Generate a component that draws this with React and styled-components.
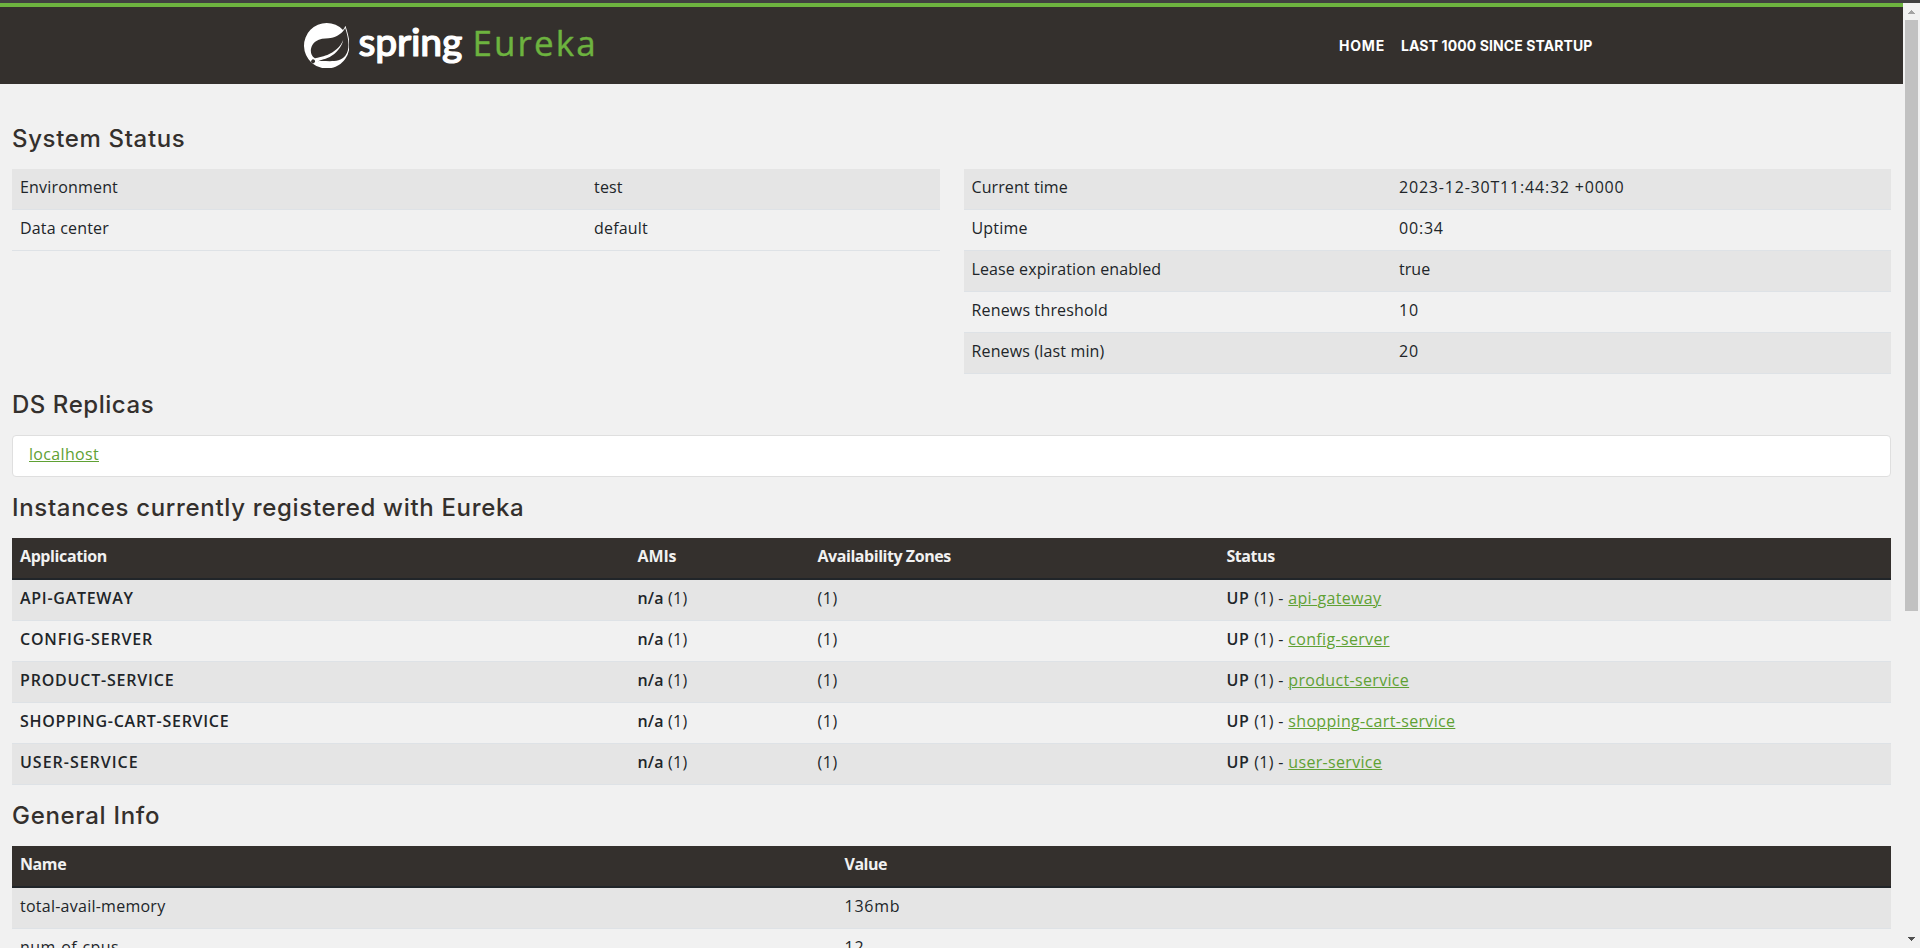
import React from 'react';
import styled, { createGlobalStyle } from 'styled-components';
import { SiSpring } from 'react-icons/si';

const GlobalStyle = createGlobalStyle`
  * { box-sizing: border-box; }
  html, body { margin: 0; height: 948px; overflow: hidden; }
  body {
    background: #f1f1f1;
    color: #212529;
    font: 400 16px/24px "Open Sans", "Noto Sans", sans-serif;
  }
`;

const Screen = styled.div`
  display: flex;
  flex-direction: column;
  height: 948px;
  overflow: hidden;
`;
const WindowEdge = styled.div`
  flex: none;
  height: 3px;
  background: #404040;
`;
const Viewport = styled.div`
  flex: 1;
  min-height: 0;
  display: flex;
`;
const Page = styled.main`
  flex: 1;
  min-width: 0;
  overflow: hidden;
`;

/* Header */
const Header = styled.header`
  height: 81px;
  border-top: 4px solid #6db33f;
  background: #34302d;
`;
const HeaderInner = styled.div`
  width: 1320px;
  height: 77px;
  margin: 0 auto;
  padding: 0 19px 0 12px;
  display: flex;
  justify-content: space-between;
  align-items: center;
`;
const Brand = styled.div`
  display: flex;
  align-items: center;
  height: 77px;
`;
const Mark = styled(SiSpring)`
  width: 45.5px;
  height: 45.5px;
  color: #fff;
`;
const Wordmark = styled.svg`
  display: block;
  width: 250px;
  height: 77px;
`;
const Nav = styled.nav`
  display: flex;
  gap: 16px;
`;
const NavLink = styled.a`
  color: #fff;
  font: 700 14px/20px Inter, "Open Sans", sans-serif;
  letter-spacing: ${(p) => p.$ls || 0}px;
`;

/* Content */
const Content = styled.div`
  padding: 24px 12px 0;
`;
const Heading = styled.h1`
  height: 61px;
  margin: 0;
  padding-top: 16px;
  color: #34302d;
  font: 500 24px/29px Inter, "Open Sans", sans-serif;
  letter-spacing: ${(p) => p.$ls || 0}px;
`;
const Columns = styled.div`
  display: grid;
  grid-template-columns: 1fr 1fr;
  gap: 24px;
  align-items: start;
`;
const Table = styled.div`
  display: grid;
  grid-template-columns: ${(p) => p.$cols};
`;
const Row = styled.div`
  display: grid;
  grid-template-columns: subgrid;
  grid-column: 1 / -1;
  height: 41px;
  border-bottom: 1px solid #dee2e6;
  background: ${(p) => (p.$odd ? '#e5e5e5' : 'transparent')};
`;
const HeadRow = styled(Row)`
  height: 42px;
  border-bottom: 2px solid #212529;
  background: #34302d;
  color: #f1f1f1;
  font-weight: 700;
`;
const Cell = styled.div`
  padding: 6px 8px 0;
  white-space: pre;
  letter-spacing: ${(p) => (p.$ls === undefined ? 0.18 : p.$ls)}px;
`;
const Strong = styled.b`
  font-weight: 600;
  letter-spacing: ${(p) => p.$ls || 0}px;
`;
const Link = styled.a`
  color: #5fa134;
  letter-spacing: 0.33px;
  text-decoration: underline 1px;
  text-underline-offset: 1px;
  text-decoration-skip-ink: auto;
`;
const ListGroup = styled.div`
  height: 42px;
  padding: 6px 16px;
  border: 1px solid #dfdfdf;
  border-radius: 4px;
  background: #fff;
`;

/* Scrollbar */
const Scrollbar = styled.div`
  flex: none;
  width: 17px;
  display: flex;
  flex-direction: column;
  align-items: center;
  background: #f1f1f1;
`;
const Arrow = styled.svg`
  display: block;
  flex: none;
  width: 17px;
  height: 17px;
`;
const Track = styled.div`
  flex: 1;
  width: 13px;
`;
const Thumb = styled.div`
  height: 591px;
  background: #c1c1c1;
`;

const environment = [
  ['Environment', 'test'],
  ['Data center', 'default'],
];
const runtime = [
  ['Current time', '2023-12-30T11:44:32 +0000', 0.1, 0.8],
  ['Uptime', '00:34', 0.2, 0.8],
  ['Lease expiration enabled', 'true', 0.1, 0.05],
  ['Renews threshold', '10', 0.17, 0.8],
  ['Renews (last min)', '20', 0.15, 0.8],
];
const instances = [
  ['API-GATEWAY', 'api-gateway', 0.72],
  ['CONFIG-SERVER', 'config-server', 0.81],
  ['PRODUCT-SERVICE', 'product-service', 0.8],
  ['SHOPPING-CART-SERVICE', 'shopping-cart-service', 0.72],
  ['USER-SERVICE', 'user-service', 0.98],
];
const general = [
  ['total-avail-memory', '136mb', 0.25, 0.75],
  ['num-of-cpus', '12', 0.4, 0.8],
];

function PairRows({ rows }) {
  return rows.map(([name, value, nameLs, valueLs], i) => (
    <Row key={name} $odd={i % 2 === 0}>
      <Cell $ls={nameLs}>{name}</Cell>
      <Cell $ls={valueLs}>{value}</Cell>
    </Row>
  ));
}

export default function App() {
  return (
    <>
      <GlobalStyle />
      <Screen>
        <WindowEdge />
        <Viewport>
          <Page>
            <Header>
              <HeaderInner>
                <Brand>
                  <Mark />
                  <Wordmark viewBox="0 0 250 77">
                    <text x="9.5" y="49" fill="#fff" stroke="#fff" strokeWidth="1.2" strokeLinejoin="round" fontFamily="Lato, sans-serif" fontWeight="500" fontSize="39" letterSpacing="-0.2">spring</text>
                    <text x="123.5" y="49" fill="#6db33f" stroke="#6db33f" strokeWidth="0.4" strokeLinejoin="round" fontFamily="Open Sans, sans-serif" fontSize="35" letterSpacing="2.1">Eureka</text>
                  </Wordmark>
                </Brand>
                <Nav>
                  <NavLink $ls={0.8}>HOME</NavLink>
                  <NavLink $ls={0.1}>LAST 1000 SINCE STARTUP</NavLink>
                </Nav>
              </HeaderInner>
            </Header>
            <Content>
              <Heading $ls={0.65}>System Status</Heading>
              <Columns>
                <Table $cols="574px 1fr">
                  <PairRows rows={environment} />
                </Table>
                <Table $cols="427.5px 1fr">
                  <PairRows rows={runtime} />
                </Table>
              </Columns>
              <Heading $ls={0.55}>DS Replicas</Heading>
              <ListGroup>
                <Link>localhost</Link>
              </ListGroup>
              <Heading $ls={0.67}>Instances currently registered with Eureka</Heading>
              <Table $cols="617.5px 180px 409px 1fr">
                <HeadRow>
                  <Cell $ls={-0.4}>Application</Cell>
                  <Cell $ls={-0.1}>AMIs</Cell>
                  <Cell $ls={-0.45}>Availability Zones</Cell>
                  <Cell $ls={-0.45}>Status</Cell>
                </HeadRow>
                {instances.map(([name, host, ls], i) => (
                  <Row key={name} $odd={i % 2 === 0}>
                    <Cell><Strong $ls={ls}>{name}</Strong></Cell>
                    <Cell $ls={0.3}><Strong $ls={0.15}>n/a</Strong> (1)</Cell>
                    <Cell $ls={0.57}>(1)</Cell>
                    <Cell $ls={0.35}><Strong $ls={0.7}>UP</Strong> (1) - <Link>{host}</Link></Cell>
                  </Row>
                ))}
              </Table>
              <Heading $ls={0.7}>General Info</Heading>
              <Table $cols="824.5px 1fr">
                <HeadRow>
                  <Cell $ls={-0.4}>Name</Cell>
                  <Cell $ls={-0.5}>Value</Cell>
                </HeadRow>
                <PairRows rows={general} />
              </Table>
            </Content>
          </Page>
          <Scrollbar>
            <Arrow viewBox="0 0 17 17" shapeRendering="crispEdges">
              <path d="M5 11h7v-1h-1v-1h-1v-1h-1v-1h-1v1h-1v1h-1v1h-1z" fill="#a3a3a3" />
            </Arrow>
            <Track>
              <Thumb />
            </Track>
            <Arrow viewBox="0 0 17 17" shapeRendering="crispEdges">
              <path d="M5 6h7v1h-1v1h-1v1h-1v1h-1v-1h-1v-1h-1v-1h-1z" fill="#505050" />
            </Arrow>
          </Scrollbar>
        </Viewport>
      </Screen>
    </>
  );
}
